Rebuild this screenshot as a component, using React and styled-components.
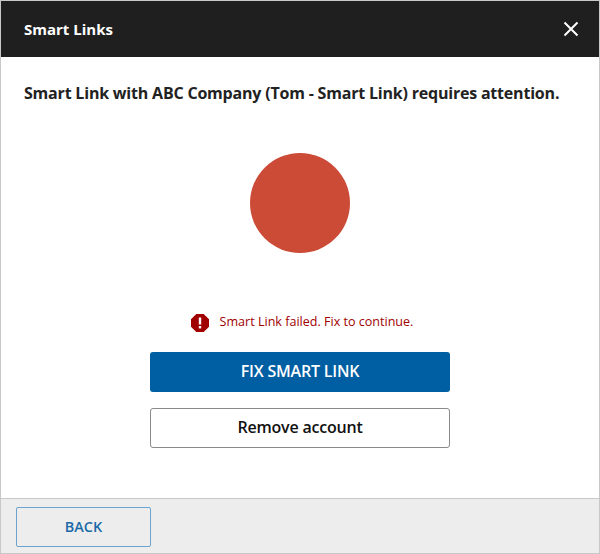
import React from "react";
import styled, { createGlobalStyle } from "styled-components";

const GlobalStyle = createGlobalStyle`
  html, body {
    margin: 0;
    padding: 0;
    background: #fff;
  }
  * {
    box-sizing: border-box;
  }
`;

const App = () => {
  return (
    <>
      <GlobalStyle />
      <Dialog>
        <Header>
          <Title>Smart Links</Title>
          <CloseIcon width="16" height="16" viewBox="0 0 16 16">
            <path d="M1.5 1.5 L14.5 14.5 M14.5 1.5 L1.5 14.5" stroke="#fff" strokeWidth="2" fill="none" />
          </CloseIcon>
        </Header>
        <Body>
          <Message>Smart Link with ABC Company (Tom - Smart Link) requires attention.</Message>
          <StatusDot />
          <ErrorRow>
            <ErrorIcon width="18" height="18" viewBox="0 0 18 18">
              <polygon points="5.3,0 12.7,0 18,5.3 18,12.7 12.7,18 5.3,18 0,12.7 0,5.3" fill="#a00000" />
              <rect x="7.8" y="3.5" width="2.4" height="7" fill="#fff" />
              <rect x="7.8" y="12" width="2.4" height="2.4" fill="#fff" />
            </ErrorIcon>
            <ErrorText>Smart Link failed. Fix to continue.</ErrorText>
          </ErrorRow>
          <PrimaryButton>FIX SMART LINK</PrimaryButton>
          <SecondaryButton>Remove account</SecondaryButton>
        </Body>
        <Footer>
          <BackButton>BACK</BackButton>
        </Footer>
      </Dialog>
    </>
  );
};

const Dialog = styled.div`
  width: 600px;
  height: 554px;
  display: flex;
  flex-direction: column;
  border: 1px solid #c8c8c8;
  font-family: "Open Sans", "Noto Sans", sans-serif;
  background: #fff;
`;

const Header = styled.div`
  height: 56px;
  flex-shrink: 0;
  display: flex;
  align-items: center;
  justify-content: space-between;
  padding: 0 20px 0 23px;
  background: #1f1f1f;
`;

const Title = styled.div`
  color: #fff;
  font-size: 15px;
  font-weight: 700;
`;

const CloseIcon = styled.svg`
  display: block;
`;

const Body = styled.div`
  flex: 1;
  display: flex;
  flex-direction: column;
  align-items: center;
  padding: 26px 23px 0;
`;

const Message = styled.div`
  align-self: flex-start;
  font-size: 16px;
  line-height: 20px;
  font-weight: 700;
  letter-spacing: -0.2px;
  color: #222;
  white-space: nowrap;
`;

const StatusDot = styled.div`
  width: 100px;
  height: 100px;
  margin-top: 50px;
  border-radius: 50%;
  background: #cc4b37;
`;

const ErrorRow = styled.div`
  display: flex;
  align-items: flex-start;
  margin: 61px 0 0 4px;
  height: 38px;
`;

const ErrorIcon = styled.svg`
  display: block;
  margin-right: 11px;
`;

const ErrorText = styled.div`
  font-size: 12.55px;
  line-height: 16px;
  color: #a00000;
`;

const PrimaryButton = styled.button`
  width: 300px;
  height: 40px;
  padding: 0 0 2px;
  border: none;
  border-radius: 3px;
  background: #005ea2;
  color: #fff;
  font-family: inherit;
  font-size: 16px;
  font-weight: 600;
  letter-spacing: -0.2px;
`;

const SecondaryButton = styled.button`
  width: 300px;
  height: 40px;
  margin-top: 16px;
  padding: 0 0 2px;
  border: 1px solid #8a8a8a;
  border-radius: 3px;
  background: #fff;
  color: #111;
  font-family: inherit;
  font-size: 16px;
  font-weight: 600;
  letter-spacing: -0.2px;
`;

const Footer = styled.div`
  height: 55px;
  flex-shrink: 0;
  display: flex;
  align-items: center;
  padding: 1px 15px 0;
  background: #ededed;
  border-top: 1px solid #c8c8c8;
`;

const BackButton = styled.button`
  width: 135px;
  height: 40px;
  border: 1px solid #6ba4d0;
  border-radius: 2px;
  background: transparent;
  color: #1a6aa8;
  font-family: inherit;
  font-size: 14.4px;
  font-weight: 600;
`;

export default App;
